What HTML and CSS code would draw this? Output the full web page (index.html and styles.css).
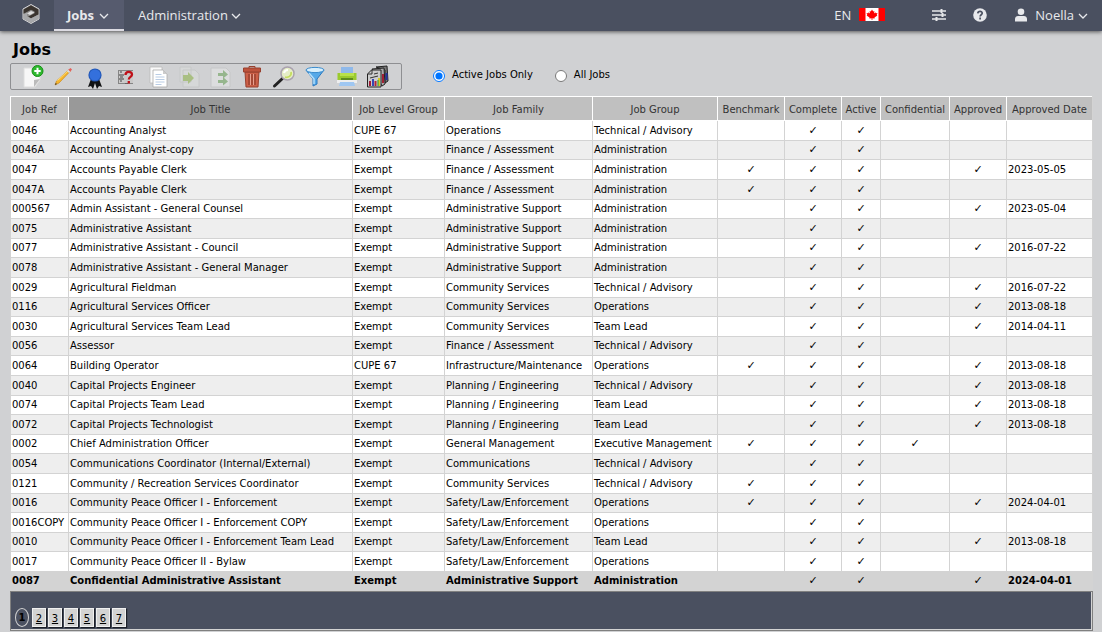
FILE: index.html
```html
<!DOCTYPE html>
<html lang="en">
<head>
<meta charset="utf-8">
<title>Jobs</title>
<link rel="stylesheet" href="styles.css">
</head>
<body>
<header class="topbar">
  <a class="logo" href="#" aria-label="Home">
    <svg viewBox="0 0 18 20" width="18" height="20"><path d="M9 .5 17 5v10l-8 4.500L1 15V5z" fill="#8e8d8c" stroke="#d8d8da" stroke-width="1"/><path d="M1.500 5.500 9 1.300l7.500 4.200v5L9 14.300l-3-1.600 6.500-3.500V7.500L9 5.800 4.500 8.200 1.500 9.800z" fill="#3a342f"/><path d="M1.500 10.500 5 8.500v3.800l4 2.200 7.500-4V15L9 18.800 1.500 15z" fill="#a7a8aa"/><path d="M5 9.500 9 7l3.500 1.500L8 11z" fill="#dcdcdc"/></svg>
  </a>
  <nav class="menu">
    <a class="menu-item current" href="#">Jobs <svg class="chevron" viewBox="0 0 10 6"><path d="M1 1l4 4 4-4"/></svg></a>
    <a class="menu-item" href="#">Administration <svg class="chevron" viewBox="0 0 10 6"><path d="M1 1l4 4 4-4"/></svg></a>
  </nav>
  <div class="tools">
    <a class="lang" href="#">EN
      <svg viewBox="0 0 26 13" width="26" height="13"><path d="M0 0h26v13H0z" fill="#fff"/><path d="M0 0h6.500v13H0zM19.500 0H26v13h-6.500z" fill="#f00"/><path d="M13 1.500l1.200 2 1.200-.5-.4 2.500 1.400-1.200.4.900 1.700-.2-.8 1.900.7.500-2.900 2.200.2 1-2.300-.4V12h-.8v-1.800l-2.300.4.200-1-2.900-2.200.7-.5-.8-1.900 1.700.2.400-.9L11 5.500 10.600 3l1.200.5z" fill="#f00"/></svg>
    </a>
    <a class="settings" href="#" aria-label="Settings"><svg viewBox="0 0 14 12" width="14" height="12" fill="none" stroke="#e6e7ea" stroke-width="1.300"><path d="M0 2h14M0 6h14M0 10h14"/><path d="M9.500 0v4M10.500 4v4M4.500 8v4" stroke-width="2"/></svg></a>
    <a class="help" href="#" aria-label="Help"><svg viewBox="0 0 14 14" width="14" height="14"><circle cx="7" cy="7" r="6.800" fill="#e8e9ec"/><path d="M4.800 5.400C5 2.700 9.300 2.800 9.200 5.300 9.200 6.700 7.200 6.800 7.100 8.500M7.100 9.600v1.800" fill="none" stroke="#4a5060" stroke-width="1.700"/></svg></a>
    <a class="user" href="#"><svg viewBox="0 0 12 14" width="12" height="14" fill="#e8e9ec"><circle cx="6" cy="3.800" r="3.300"/><path d="M0 13.500V11c0-2 1.500-3 3-3h6c1.500 0 3 1 3 3v2.500z"/></svg><span>Noella</span><svg class="chevron" viewBox="0 0 10 6"><path d="M1 1l4 4 4-4"/></svg></a>
  </div>
</header>
<main class="page">
  <h1>Jobs</h1>
  <div class="controls">
    <div class="toolbar" role="toolbar" aria-label="Job actions">
      <button aria-label="New"><svg viewBox="0 0 24 24"><path d="M4 3h16v12l-5 7H4z" fill="#f7f7f7" stroke="#ddd"/><path d="M20 14l-6 1v7z" fill="#bbb"/><circle cx="17.500" cy="6" r="5.500" fill="#2eb82e" stroke="#169016"/><path d="M17.500 2.800v6.400M14.300 6h6.400" stroke="#fff" stroke-width="2"/></svg></button>
      <button aria-label="Edit"><svg viewBox="0 0 24 24"><path d="M4 20l1.500-4L17.500 5l1.500 1.500L8 18z" fill="#f5b52c" stroke="#cc8a1c" stroke-width=".7"/><path d="M6.500 15.500L17.500 5.500" stroke="#ffe07a"/><path d="M17 5l2.500-2 1.500 1.500L19 7z" fill="#e4605c"/><path d="M16 6l2 2 1.200-1.200-2-2z" fill="#d7dce0"/><path d="M4 20l.7-2L6 19z" fill="#333"/></svg></button>
      <button aria-label="Certify"><svg viewBox="0 0 24 24"><path d="M8 14l-3 8 3-1 2 3 2-6 2 6 2-3 3 1-3-8z" fill="#101214"/><circle cx="12" cy="10" r="6.600" fill="#2258b8"/><circle cx="12" cy="10" r="5.500" fill="#3470dc"/></svg></button>
      <button aria-label="Questionnaire"><svg viewBox="0 0 24 24"><path d="M4 5h15v14H4z" fill="#858585"/><path d="M5 6h5v3H5zM5 11h5v2H5zM5 15h5v3H5z" fill="#ccc"/><path d="M6 7h2M6 12h3M6 16h2M11 18h3" stroke="#444"/><path d="M10 6h9v12h-9z" fill="#c9c9c9"/><path d="M11.500 10c0-4 6.500-4 6.500-.5 0 2.500-3.200 2.300-3.200 5M14.800 16v2.500" fill="none" stroke="#bf1018" stroke-width="2.300"/></svg></button>
      <button aria-label="Copy"><svg viewBox="0 0 24 24"><path d="M4 2h12v16H4z" fill="#fafafa" stroke="#bbb" stroke-width=".8"/><path d="M7 5h10l4 4v13H7z" fill="#fff" stroke="#aaa" stroke-width=".8"/><path d="M17 5v4h4z" fill="#ccc"/><path d="M9.500 9.500h6M9.500 12h9M9.500 14.500h9M9.500 17h9M9.500 19.500h6" stroke="#b9cce4"/></svg></button>
      <button disabled aria-label="Import"><svg viewBox="0 0 24 24"><path d="M3 2h11v15H3zM6 5h12l4 4v13H6z" fill="#d6d8d8" stroke="#c6c8c8"/><path d="M6 10h5V7l6 6-6 6v-3H6z" fill="#a9bf83"/></svg></button>
      <button disabled aria-label="Export"><svg viewBox="0 0 24 24"><path d="M2 3h15l4 4v15H2z" fill="#dcddde" stroke="#c6c7c8"/><path d="M9 8h5V5l5 4.500-5 4V11H9zM9 15h5v-3l5 4.500-5 4V18H9z" fill="#96b68d"/></svg></button>
      <button aria-label="Delete"><svg viewBox="0 0 24 24"><path d="M5 7h14l-1 15H6z" fill="#cc6048" stroke="#98412f"/><path d="M9 9v11M12 9v11M15 9v11" stroke="#8d3a2a" stroke-width="1.200"/><path d="M10.500 9v11M13.500 9v11" stroke="#e9a08f"/><path d="M3.500 3h17v4h-17z" fill="#be533c" stroke="#98412f"/><path d="M9 3V1.500h6V3" fill="none" stroke="#98412f"/></svg></button>
      <button aria-label="Search"><svg viewBox="0 0 24 24"><path d="M2.500 21l8-7.500" stroke="#222" stroke-width="3" stroke-linecap="round"/><circle cx="15.500" cy="8.500" r="6.500" fill="#e5edc7" stroke="#aaa2ae" stroke-width="1.500"/><path d="M12 8c.5-2 2-3 4-3" fill="none" stroke="#fff" stroke-width="2"/><path d="M19 7c1 4-3 6-6 5" fill="none" stroke="#c5dc61" stroke-width="1.800"/></svg></button>
      <button aria-label="Filter"><svg viewBox="0 0 24 24"><path d="M3 5l7 9v7l4-2v-5l7-9z" fill="#56a9e8" stroke="#2a78c0"/><path d="M6 8l5 6v5" fill="none" stroke="#b4defa" stroke-width="1.500"/><ellipse cx="12" cy="5" rx="9" ry="2.600" fill="#d8effc" stroke="#3b8ccd"/></svg></button>
      <button aria-label="Print"><svg viewBox="0 0 24 24"><path d="M6 2h12v8H6z" fill="#8fb9ea"/><path d="M2.500 8h19v7h-19z" fill="#9bcb2e"/><path d="M5 8h14v3H5z" fill="#b9e14b"/><path d="M6 13h12v2H6z" fill="#5f8c20"/><path d="M2 15h20v3H2z" fill="#eee"/><path d="M5 17h14l1 4H4z" fill="#9fc7f2"/></svg></button>
      <button aria-label="Reports"><svg viewBox="0 0 24 24"><path d="M10 2l11-1 1 15-3 2V5z" fill="#777" stroke="#222"/><path d="M6 4l12-1 1 16-3 2z" fill="#aaa" stroke="#222"/><path d="M1.500 9l4-4H15v17H1.500z" fill="#ccc" stroke="#222"/><path d="M2 9h4V5M8 9l4-1M4 13l8-2" stroke="#333" fill="none"/><path d="M4 21v-5" stroke="#a21c38" stroke-width="2"/><path d="M7 21v-7" stroke="#3348b5" stroke-width="2"/><path d="M9.500 21v-5" stroke="#b22435" stroke-width="2"/><path d="M13 21v-8" stroke="#d5ca24" stroke-width="2"/><path d="M12 21v-6" stroke="#249a36"/><path d="M17 18V9" stroke="#a22035" stroke-width="2"/><path d="M20.500 15V8" stroke="#26359e" stroke-width="2"/></svg></button>
    </div>
    <fieldset class="scope">
      <label><input type="radio" name="scope" checked>Active Jobs Only</label>
      <label><input type="radio" name="scope">All Jobs</label>
    </fieldset>
  </div>
  <table class="jobs">
    <colgroup><col class="c-ref"><col><col class="c-level"><col class="c-family"><col class="c-group"><col class="c-bench"><col class="c-complete"><col class="c-active"><col class="c-conf"><col class="c-appr"><col class="c-date"></colgroup>
    <thead><tr><th>Job Ref</th><th class="sorted">Job Title</th><th>Job Level Group</th><th>Job Family</th><th>Job Group</th><th>Benchmark</th><th>Complete</th><th>Active</th><th>Confidential</th><th>Approved</th><th>Approved Date</th></tr></thead>
    <tbody id="rows"></tbody>
  </table>
  <nav class="pager" aria-label="Pages">
    <span class="page-now">1</span><a href="#">2</a><a href="#">3</a><a href="#">4</a><a href="#">5</a><a href="#">6</a><a href="#">7</a>
  </nav>
</main>
<script src="jobs.js"></script>
</body>
</html>
```

FILE: styles.css
```css
* { box-sizing: border-box; }
body { margin: 0; background: #d0d1d3; color: #000; font-family: Verdana, "DejaVu Sans", sans-serif; font-size: 10px; }
a { color: inherit; text-decoration: none; }

.topbar { display: flex; height: 31px; background: #4a5060; color: #e8e9ec; font-family: "Open Sans", sans-serif; font-size: 13px; box-shadow: 0 1px 4px rgba(0,0,0,.6); }
.logo { display: flex; align-items: center; padding: 0 14px 3px 22px; }
.menu { display: flex; }
.menu-item { display: flex; align-items: center; gap: 3px; padding: 0 14px 2px; height: 31px; }
.menu-item.current { gap: 5px; padding: 0 15px 0 13px; background: #565b6e; border-bottom: 2px solid #dcdbe2; font-weight: 700; }
.chevron { width: 10px; height: 6px; fill: none; stroke: #e8e9ec; stroke-width: 1.3; margin-top: 3px; }
.tools { display: flex; align-items: center; margin-left: auto; padding: 0 14px 2px 0; }
.tools a { display: flex; align-items: center; }
.lang { gap: 8px; margin-right: 47px; }
.settings { margin-right: 27px; }
.help { margin-right: 28px; }
.user { gap: 8px; }
.user .chevron { margin-left: -4px; }

.page { padding: 9px 9px 1px 10px; }
h1 { margin: 0; padding-left: 3px; font-size: 16px; line-height: 20px; font-weight: 700; }
.controls { display: flex; align-items: center; margin: 3px 0 6px; }
.toolbar { display: flex; justify-content: space-between; align-items: center; width: 392px; height: 27px; padding: 0 11px 0 9px; border: 1px solid #8e8f92; border-radius: 2px; }
.toolbar button { display: block; width: 24px; height: 24px; padding: 0; border: 0; background: none; }
.toolbar svg { display: block; width: 24px; height: 24px; }
.scope { display: flex; gap: 22px; margin: 0 0 3px 31px; padding: 0; border: 0; }
.scope label { display: flex; align-items: center; line-height: 14px; }
.scope input { width: 12px; height: 12px; margin: 2px 7px 0 0; }

.jobs { width: 100%; table-layout: fixed; border-collapse: separate; border-spacing: 0; border-right: 1px solid #d3d3d3; }
.c-ref { width: 58px; }
.c-level { width: 92px; }
.c-family { width: 148px; }
.c-group { width: 125px; }
.c-bench { width: 67px; }
.c-complete { width: 57px; }
.c-active { width: 39px; }
.c-conf { width: 69px; }
.c-appr { width: 57px; }
.c-date { width: 86px; }
.jobs th { height: 25px; padding: 2px 0 0; border: solid #fff; border-width: 1px 0 1px 1px; background: #c0c0c0; color: #333; font-weight: 400; white-space: nowrap; }
.jobs th.sorted { background: #999; }
.jobs td { height: 20px; padding: 0 0 0 1px; border: solid #d3d3d3; border-width: 0 0 1px 1px; background: #fff; line-height: 18px; white-space: nowrap; }
.jobs tr:nth-child(even) td { background: #eee; }
.jobs tbody tr:nth-child(5n) td, .jobs tbody tr:nth-child(5n+2) td, .jobs tbody tr:last-child td { height: 19px; }
.jobs tbody tr.selected td { background: #d3d3d3; font-weight: 700; }
.jobs tbody td.tick { padding: 0; font-size: 11px; font-weight: 700; text-align: center; }

.pager { display: flex; align-items: flex-end; gap: 2px; height: 40px; padding: 0 4px 3px; background: #4a5060; border: 1px solid #808080; box-shadow: inset -1px -1px 0 #d3d3d3; }
.pager a { width: 14px; height: 19px; background: #d3d3d3; box-shadow: 1px 1px 1px #1c1f28; border: 1px solid #f0f0f0; line-height: 19px; text-align: center; text-decoration: underline; }
.page-now { width: 14px; height: 19px; margin-right: 1px; border: 1px solid #d3d3d3; border-radius: 50%; font-weight: 700; line-height: 18px; text-align: center; }
```

FILE: jobs.js
```js
const FA = "Finance / Assessment", AS = "Administrative Support", CS = "Community Services", PE = "Planning / Engineering", SL = "Safety/Law/Enforcement";
const AD = "Administration", TA = "Technical / Advisory", OP = "Operations", TL = "Team Lead", EX = "Exempt", CU = "CUPE 67";

// ref, title, level, family, group, flags (b = benchmark, c = confidential), approval date
const jobs = [
  ["0046", "Accounting Analyst", CU, OP, TA, "", ""],
  ["0046A", "Accounting Analyst-copy", EX, FA, AD, "", ""],
  ["0047", "Accounts Payable Clerk", EX, FA, AD, "b", "2023-05-05"],
  ["0047A", "Accounts Payable Clerk", EX, FA, AD, "b", ""],
  ["000567", "Admin Assistant - General Counsel", EX, AS, AD, "", "2023-05-04"],
  ["0075", "Administrative Assistant", EX, AS, AD, "", ""],
  ["0077", "Administrative Assistant - Council", EX, AS, AD, "", "2016-07-22"],
  ["0078", "Administrative Assistant - General Manager", EX, AS, AD, "", ""],
  ["0029", "Agricultural Fieldman", EX, CS, TA, "", "2016-07-22"],
  ["0116", "Agricultural Services Officer", EX, CS, OP, "", "2013-08-18"],
  ["0030", "Agricultural Services Team Lead", EX, CS, TL, "", "2014-04-11"],
  ["0056", "Assessor", EX, FA, TA, "", ""],
  ["0064", "Building Operator", CU, "Infrastructure/Maintenance", OP, "b", "2013-08-18"],
  ["0040", "Capital Projects Engineer", EX, PE, TA, "", "2013-08-18"],
  ["0074", "Capital Projects Team Lead", EX, PE, TL, "", "2013-08-18"],
  ["0072", "Capital Projects Technologist", EX, PE, TL, "", "2013-08-18"],
  ["0002", "Chief Administration Officer", EX, "General Management", "Executive Management", "bc", ""],
  ["0054", "Communications Coordinator (Internal/External)", EX, "Communications", TA, "", ""],
  ["0121", "Community / Recreation Services Coordinator", EX, CS, TA, "b", ""],
  ["0016", "Community Peace Officer I - Enforcement", EX, SL, OP, "b", "2024-04-01"],
  ["0016COPY", "Community Peace Officer I - Enforcement COPY", EX, SL, OP, "", ""],
  ["0010", "Community Peace Officer I - Enforcement Team Lead", EX, SL, TL, "", "2013-08-18"],
  ["0017", "Community Peace Officer II - Bylaw", EX, SL, OP, "", ""],
  ["0087", "Confidential Administrative Assistant", EX, AS, AD, "", "2024-04-01"]
];

const body = document.getElementById("rows");
for (const [ref, title, level, family, group, flags, date] of jobs) {
  const row = body.insertRow();
  if (ref === "0087") row.className = "selected";
  for (const text of [ref, title, level, family, group]) row.insertCell().textContent = text;
  for (const on of [flags.includes("b"), true, true, flags.includes("c"), date !== ""]) {
    const cell = row.insertCell();
    cell.className = "tick";
    cell.textContent = on ? "✓" : "";
  }
  row.insertCell().textContent = date;
}
```
